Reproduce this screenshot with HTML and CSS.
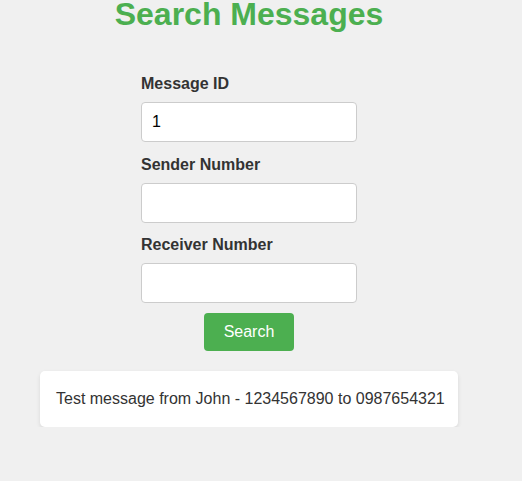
FILE: index.html
```html
<!DOCTYPE html>
<html>
<head>
<meta charset="utf-8">
<link rel="stylesheet" href="styles.css">
</head>
<body>
<div class="page">
  <h1 class="title">Search Messages</h1>
  <form class="search-form">
    <label class="field-label" for="mid">Message ID</label>
    <input class="field-input" id="mid" type="text" value="1">
    <label class="field-label" for="sender">Sender Number</label>
    <input class="field-input" id="sender" type="text">
    <label class="field-label" for="receiver">Receiver Number</label>
    <input class="field-input field-input--last" id="receiver" type="text">
    <button class="search-btn" type="button">Search</button>
  </form>
  <div class="result-card">Test message from John - 1234567890 to 0987654321</div>
</div>
</body>
</html>
```

FILE: styles.css
```css
html, body {
  margin: 0;
  padding: 0;
  background: #f0f0f0;
  font-family: "Liberation Sans", Arial, sans-serif;
}

.page {
  width: 498px;
  display: flex;
  flex-direction: column;
}

.title {
  margin: -4px 0 42px;
  font-size: 32px;
  font-weight: bold;
  color: #4caf50;
  text-align: center;
  line-height: normal;
}

.search-form {
  width: 216px;
  margin: 0 auto;
  display: flex;
  flex-direction: column;
}

.field-label {
  font-size: 16px;
  font-weight: bold;
  color: #333;
  margin-bottom: 9px;
  line-height: normal;
}

.field-input {
  box-sizing: border-box;
  width: 216px;
  height: 40px;
  padding: 10px;
  margin: 0 0 13.5px;
  border: 1px solid #ccc;
  border-radius: 4px;
  background: #fff;
  font-family: "Liberation Sans", Arial, sans-serif;
  font-size: 16px;
  color: #000;
  outline: none;
}

.field-input--last {
  margin-bottom: 10px;
}

.search-btn {
  align-self: center;
  height: 38px;
  padding: 0 20px;
  border: none;
  border-radius: 4px;
  background: #4caf50;
  color: #fff;
  font-family: "Liberation Sans", Arial, sans-serif;
  font-size: 16px;
}

.result-card {
  box-sizing: border-box;
  width: 418px;
  margin: 20px auto 0;
  padding: 19px 15px 19px 16px;
  background: #fff;
  border-radius: 5px;
  box-shadow: 0 2px 4px rgba(0, 0, 0, 0.1);
  font-size: 16px;
  color: #333;
  line-height: normal;
  white-space: nowrap;
  overflow: hidden;
}
```
